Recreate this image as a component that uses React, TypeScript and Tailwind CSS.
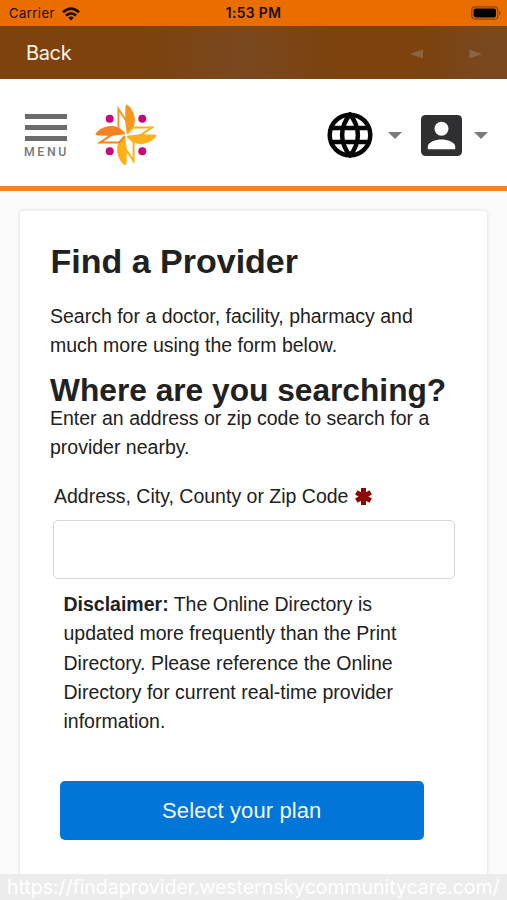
import React from "react";

const arms = [
  { angle: 0, color: "#f8971d" },
  { angle: 90, color: "#fcb019" },
  { angle: 180, color: "#fbb216" },
  { angle: 270, color: "#f58220" },
];

function Logo() {
  return (
    <svg className="h-[62px] w-[62px] shrink-0" viewBox="-31 -31 62 62">
      {arms.map(({ angle, color }) => (
        <g key={angle} transform={`rotate(${angle})`}>
          <path d="M0.3 -30.8 C5.5 -28.5 10.5 -19 8.4 -10.5 L7 -7 L0.8 -1.2 L-0.8 -14 Z" fill={color} />
          <path
            d="M0.4 -29 V-14 L-7.6 -26 V-7 L-1.2 -1.2"
            fill="none"
            stroke={color}
            strokeWidth="2"
          />
        </g>
      ))}
      {[-16.3, 16.3].map((x) =>
        [-16.3, 16.3].map((y) => <circle key={`${x}${y}`} cx={x} cy={y} r="4" fill="#c6087f" />),
      )}
    </svg>
  );
}

function Wifi() {
  return (
    <svg className="ml-[7px] h-[14px] w-[18px]" viewBox="0 0 18 14">
      <g fill="none" stroke="#1c0c00" strokeWidth="2.7">
        <path d="M1 5.2 Q9 -2 17 5.2" />
        <path d="M4 8.5 Q9 4.1 14 8.5" />
      </g>
      <path d="M6.2 10.6 Q9 8.2 11.8 10.6 L9 13.5 Z" fill="#1c0c00" />
    </svg>
  );
}

function Globe() {
  return (
    <svg className="h-[46px] w-[46px] shrink-0" viewBox="-23 -23 46 46" fill="none" stroke="#050505" strokeWidth="4.5">
      <circle r="20.3" />
      <path d="M0 -20.5 C-10.5 -8 -10.5 8 0 20.5 C10.5 8 10.5 -8 0 -20.5 Z M-19.5 -7 H19.5 M-19.5 7 H19.5" />
    </svg>
  );
}

function Caret() {
  return (
    <svg className="h-[7px] w-[14px] shrink-0" viewBox="0 0 14 7">
      <path d="M0 0 H14 L7 7 Z" fill="#7b7b7b" />
    </svg>
  );
}

function Account() {
  return (
    <svg className="h-[41px] w-[41px] shrink-0" viewBox="0 0 41 41">
      <rect width="41" height="41" rx="4.5" fill="#303032" />
      <circle cx="20.5" cy="13.8" r="7" fill="#fff" />
      <path d="M6.8 34.3 V31.5 C6.8 27 15 24.4 20.5 24.4 S34.2 27 34.2 31.5 V34.3 Z" fill="#fff" />
    </svg>
  );
}

export default function App() {
  return (
    <div className="relative flex h-[900px] w-[507px] flex-col overflow-hidden bg-[#fafafa] font-['Liberation_Sans',Arial,sans-serif] text-[#212121]">
      <div className="grid h-[26px] shrink-0 grid-cols-3 items-center bg-[#ea6d00] font-['Inter',sans-serif] text-[13px] leading-none text-[#1c0c00]">
        <div className="flex items-center pl-[9px] pt-px">
          <span className="tracking-[0.45px]">Carrier</span>
          <Wifi />
        </div>
        <div className="pt-[2px] text-center text-[13.8px] font-semibold tracking-[0.4px]">1:53 PM</div>
        <div className="flex justify-end pr-[6px]">
          <svg className="h-[14px] w-[30px]" viewBox="0 0 30 14">
            <rect x="0.8" y="0.8" width="26" height="12.4" rx="3.5" fill="none" stroke="#8a4507" strokeWidth="1.2" />
            <rect x="2.6" y="2.4" width="22.4" height="9.2" rx="2" fill="#000" />
            <path d="M28.2 4.5 Q31 7 28.2 9.5 Z" fill="#8a4507" />
          </svg>
        </div>
      </div>

      <div className="flex h-[53px] shrink-0 items-center justify-between bg-[linear-gradient(90deg,#7d420e_0%,#7d420e_28%,#79481f_48%,#7d420e_66%,#7d420e_83%,#79481f_96%)] pl-[26px] pr-[25px]">
        <span className="font-['Inter',sans-serif] text-[20px] leading-none tracking-[-0.35px] text-[#fff3e9]">Back</span>
        <svg className="mt-[2px] h-[10px] w-[72px]" viewBox="0 0 72 10" fill="#8b6543">
          <path d="M0 5 L13 0.5 V9.5 Z M72 5 L59.5 0.5 V9.5 Z" />
        </svg>
      </div>

      <header className="flex h-[112px] shrink-0 items-center border-b-[5px] border-[#f08226] bg-white pl-[25px] pr-[19px]">
        <div className="flex w-[43px] flex-col items-start gap-[6px] pt-[7px]">
          <div className="h-[5px] w-[42px] bg-[#6c6c6c]" />
          <div className="h-[5px] w-[42px] bg-[#6c6c6c]" />
          <div className="h-[5px] w-[42px] bg-[#6c6c6c]" />
          <span className="-ml-px font-[Roboto,sans-serif] text-[12.3px] font-medium leading-[11px] tracking-[2.6px] text-[#777]">MENU</span>
        </div>
        <div className="ml-[27px] pt-[5px]">
          <Logo />
        </div>
        <div className="ml-auto flex items-center pt-[5px]">
          <Globe />
          <div className="ml-[15px]"><Caret /></div>
          <div className="ml-[19px]"><Account /></div>
          <div className="ml-[12px]"><Caret /></div>
        </div>
      </header>

      <main className="mx-[20px] mt-[20px] flex flex-1 flex-col rounded-t-[3px] bg-white pl-[30px] pr-[30px] pt-[30px] shadow-[0_0_3px_1px_#e6e6e6]">
        <h1 className="whitespace-nowrap pl-[0.5px] text-[34px] font-bold leading-[40px]">Find a Provider</h1>
        <p className="mt-[20.5px] whitespace-nowrap text-[19.5px] leading-[29.3px]">
          Search for a doctor, facility, pharmacy and
          <br />
          much more using the form below.
        </p>
        <h2 className="mt-[12px] whitespace-nowrap text-[31.7px] font-bold leading-[36px]">Where are you searching?</h2>
        <p className="-mt-[4px] whitespace-nowrap text-[19.5px] leading-[29.3px]">
          Enter an address or zip code to search for a
          <br />
          provider nearby.
        </p>
        <label className="ml-[4px] mt-[18.5px] flex h-[30px] items-center whitespace-nowrap text-[19.5px] leading-[30px]">
          Address, City, County or Zip Code
          <svg className="ml-[6.5px] h-[17px] w-[17px]" viewBox="-8.5 -8.5 17 17" stroke="#8e0505" strokeWidth="5">
            <path d="M0 -8.4 V8.4 M-7.2 -4.1 L7.2 4.1 M-7.2 4.1 L7.2 -4.1" />
          </svg>
        </label>
        <input
          aria-label="Address, City, County or Zip Code"
          className="ml-[3px] mt-[9px] h-[59px] w-[402px] shrink-0 rounded-[5px] border-[1.5px] border-[#d3d7d8] bg-white px-3 outline-none"
        />
        <p className="ml-[13.5px] mt-[11px] whitespace-nowrap text-[19.5px] leading-[29.3px]">
          <b>Disclaimer:</b> The Online Directory is
          <br />
          updated more frequently than the Print
          <br />
          Directory. Please reference the Online
          <br />
          Directory for current real-time provider
          <br />
          information.
        </p>
        <button className="ml-[9.5px] mt-[44.5px] h-[58.5px] w-[364.5px] shrink-0 rounded-[5px] bg-[#0275d8] text-[22px] tracking-[0.1px] text-[#f1faff]">
          Select your plan
        </button>
      </main>

      <div className="absolute bottom-0 left-0 flex h-[26px] w-full items-center whitespace-nowrap bg-[#ececec] pl-[7px] pt-[2px] font-['Inter',sans-serif] text-[19.5px] leading-none tracking-[-0.03px] text-white">
        https://findaprovider.westernskycommunitycare.com/
      </div>
    </div>
  );
}
